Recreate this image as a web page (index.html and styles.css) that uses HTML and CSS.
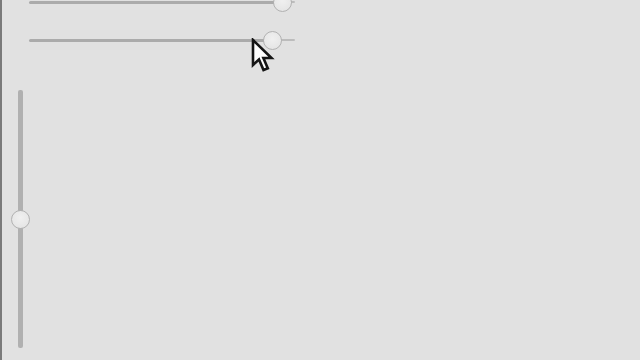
FILE: index.html
```html
<!DOCTYPE html>
<html>
<head>
<meta charset="utf-8">
<link rel="stylesheet" href="styles.css">
</head>
<body>
<div class="panel">
  <div class="hslider first">
    <div class="fill" style="width:246px"></div>
    <div class="thumb"></div>
    <div class="rest"></div>
  </div>
  <div class="hslider second">
    <div class="fill" style="width:236px"></div>
    <div class="thumb"></div>
    <div class="rest"></div>
  </div>
  <div class="vslider">
    <div class="vtrack"></div>
    <div class="thumb"></div>
    <div class="vtrack"></div>
  </div>
</div>
<svg class="cursor" width="26" height="36" viewBox="0 0 26 36">
  <path d="M2 2 L2 27 L8 21.5 L12.5 32 L16.8 30.2 L12.4 20 L20.5 20 Z" fill="#fff" stroke="#151515" stroke-width="2.6" stroke-linejoin="miter"/>
</svg>
</body>
</html>
```
FILE: styles.css
```css
html, body {
  margin: 0;
  padding: 0;
  width: 640px;
  height: 360px;
  overflow: hidden;
  background: #e1e1e1;
}
body {
  position: relative;
  font-family: "Liberation Sans", sans-serif;
}
.panel {
  height: 360px;
  border-left: 2px solid #7a7a7a;
  box-sizing: border-box;
  display: flex;
  flex-direction: column;
}
.hslider {
  display: flex;
  align-items: center;
  height: 20px;
  margin-left: 27px;
  width: 266px;
}
.hslider.first {
  margin-top: -8px;
}
.hslider.second {
  margin-top: 18px;
}
.fill {
  height: 3px;
  background: #ababab;
  border-radius: 2px;
}
.rest {
  flex: 1;
  height: 2px;
  background: #bcbcbc;
  border-radius: 1px;
}
.thumb {
  flex: none;
  width: 19px;
  height: 19px;
  border-radius: 50%;
  box-sizing: border-box;
  border: 1.5px solid #b2b2b2;
  background: radial-gradient(circle at 50% 40%, #f0f0f0 0%, #e6e6e6 70%, #dcdcdc 100%);
  margin: 0 -2px;
  position: relative;
}
.vslider {
  margin-top: 40px;
  margin-left: 8px;
  width: 20px;
  height: 258px;
  display: flex;
  flex-direction: column;
  align-items: center;
}
.vtrack {
  width: 5px;
  background: #b0b0b0;
  border-radius: 2px;
}
.vtrack:first-child {
  height: 122px;
}
.vtrack:last-child {
  flex: 1;
}
.vslider .thumb {
  margin: -2px 0;
}
.cursor {
  position: absolute;
  left: 251px;
  top: 38px;
}
```
